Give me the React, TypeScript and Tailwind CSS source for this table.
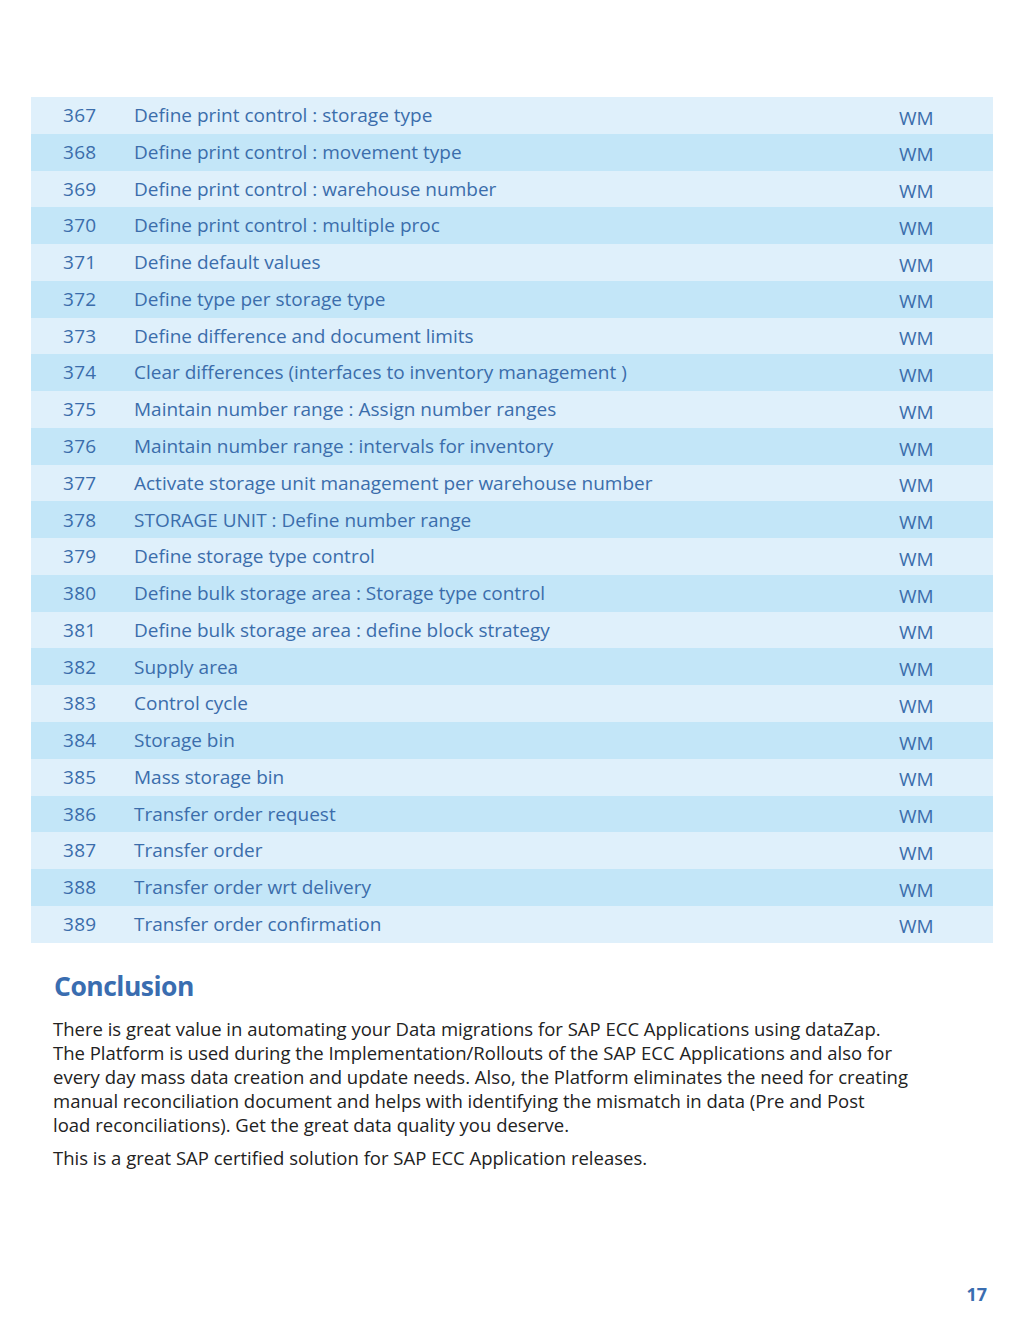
const rows: [number, string][] = [
  [367, "Define print control : storage type"],
  [368, "Define print control : movement type"],
  [369, "Define print control : warehouse number"],
  [370, "Define print control : multiple proc"],
  [371, "Define default values"],
  [372, "Define type per storage type"],
  [373, "Define difference and document limits"],
  [374, "Clear differences (interfaces to inventory management )"],
  [375, "Maintain number range : Assign number ranges"],
  [376, "Maintain number range : intervals for inventory"],
  [377, "Activate storage unit management per warehouse number"],
  [378, "STORAGE UNIT : Define number range"],
  [379, "Define storage type control"],
  [380, "Define bulk storage area : Storage type control"],
  [381, "Define bulk storage area : define block strategy"],
  [382, "Supply area"],
  [383, "Control cycle"],
  [384, "Storage bin"],
  [385, "Mass storage bin"],
  [386, "Transfer order request"],
  [387, "Transfer order"],
  [388, "Transfer order wrt delivery"],
  [389, "Transfer order confirmation"],
];

export default function App() {
  return (
    <div
      className="w-[1024px] h-[1325px] bg-white flex flex-col"
      style={{ fontFamily: '"Open Sans", "Noto Sans", sans-serif' }}
    >
      <div className="mt-[97px] mx-[31px] w-[962px] flex flex-col">
        {rows.map(([n, text], i) => (
          <div
            key={n}
            className={`h-[36.78px] flex items-center text-[19px] text-[#3b6dab] ${
              i % 2 === 0 ? "bg-[#dff0fb]" : "bg-[#c3e6f8]"
            }`}
          >
            <span className="w-[103px] pl-[32px] tracking-[0.3px]">{n}</span>
            <span className="flex-1">{text}</span>
            <span className="w-[94px] pt-[5px]">WM</span>
          </div>
        ))}
      </div>
      <div className="px-[53px] text-[#222]">
        <h2 className="mt-[25px] text-[26.5px] font-bold text-[#3a6db0] pl-[1px] leading-[36px] tracking-[-0.5px]">
          Conclusion
        </h2>
        <p className="mt-[13px] text-[18.5px] leading-[24px] w-[900px]">
          There is great value in automating your Data migrations for SAP ECC Applications using dataZap.
          <br />
          The Platform is used during the Implementation/Rollouts of the SAP ECC Applications and also for
          <br />
          every day mass data creation and update needs. Also, the Platform eliminates the need for creating
          <br />
          manual reconciliation document and helps with identifying the mismatch in data (Pre and Post
          <br />
          load reconciliations). Get the great data quality you deserve.
        </p>
        <p className="mt-[9px] text-[18.5px] leading-[24px]">
          This is a great SAP certified solution for SAP ECC Application releases.
        </p>
      </div>
      <div className="mt-auto mb-[17px] pr-[37px] flex justify-end">
        <span className="text-[18px] font-bold text-[#3a6db0]">17</span>
      </div>
    </div>
  );
}
